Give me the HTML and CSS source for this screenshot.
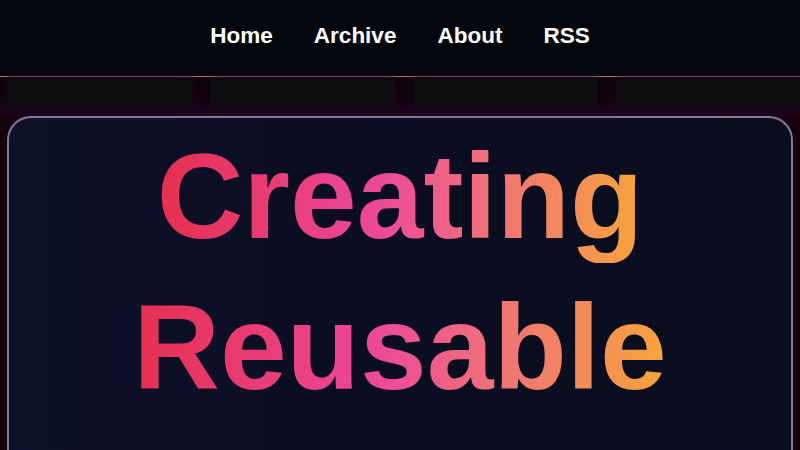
FILE: index.html
```html
<!DOCTYPE html>
<html lang="en">
<head>
<meta charset="utf-8">
<title>Creating Reusable</title>
<link rel="stylesheet" href="styles.css">
</head>
<body>
<header class="site-header">
  <nav class="nav">
    <a href="#" class="nav-link">Home</a>
    <a href="#" class="nav-link">Archive</a>
    <a href="#" class="nav-link">About</a>
    <a href="#" class="nav-link">RSS</a>
  </nav>
</header>
<div class="strip">
  <div class="strip-block"></div>
  <div class="strip-block"></div>
  <div class="strip-block"></div>
  <div class="strip-block"></div>
</div>
<main class="card">
  <h1 class="title"><span class="title-text">Creating Reusable</span></h1>
</main>
</body>
</html>
```
FILE: styles.css
```css
html, body {
  margin: 0;
  padding: 0;
}
body {
  background: #14030f;
  font-family: "Liberation Sans", Arial, sans-serif;
  height: 450px;
  overflow: hidden;
}
.site-header {
  background: #05070f;
  border-bottom: 1px solid #d0628e;
  padding: 23px 0 27px;
}
.nav {
  display: flex;
  justify-content: center;
  gap: 41px;
}
.nav-link {
  color: #ffffff;
  text-decoration: none;
  font-weight: 700;
  font-size: 22.5px;
  line-height: 26px;
}
.strip {
  display: flex;
  gap: 19px;
  padding: 1px 0 0 8px;
  height: 38px;
  background: linear-gradient(180deg, #10020c 0%, #14020f 60%, #1c0420 100%);
}
.strip-block {
  flex: 0 0 184px;
  height: 28px;
  background: #0e0d10;
  box-shadow: 0 0 6px 1px rgba(14, 13, 16, 0.8);
}
.card {
  margin: 0 7px;
  height: 335px;
  border: 2px solid #85779b;
  border-bottom: 0;
  border-radius: 24px 24px 0 0;
  background: linear-gradient(90deg, #0d102a 0%, #0b0e22 40%, #0a0d1c 100%);
  padding-top: 3px;
  box-sizing: border-box;
  overflow: hidden;
}
.title {
  margin: 0;
  text-align: center;
  font-size: 120px;
  line-height: 151px;
  font-weight: 700;
}
.title-text {
  background: linear-gradient(90deg, #e4304f 0%, #ec4899 45%, #f07575 70%, #f6a43a 100%);
  -webkit-box-decoration-break: clone;
  box-decoration-break: clone;
  -webkit-background-clip: text;
  background-clip: text;
  color: transparent;
}
```
